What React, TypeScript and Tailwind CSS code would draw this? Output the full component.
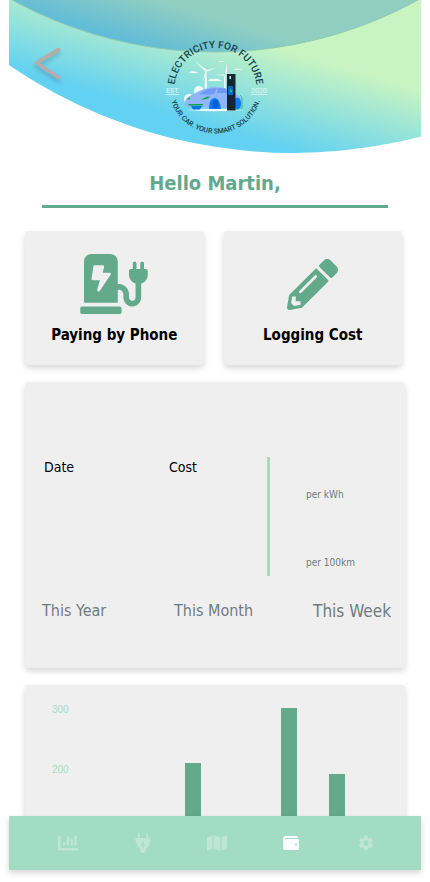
import type { ReactNode } from "react";
import { FaChargingStation, FaPencilAlt, FaChartBar, FaMap, FaWallet } from "react-icons/fa";
import { MdSettings } from "react-icons/md";

const months = [
  { id: 1, cost: 0 },
  { id: 2, cost: 0 },
  { id: 3, cost: 211 },
  { id: 4, cost: 0 },
  { id: 5, cost: 303 },
  { id: 6, cost: 194 },
];

const PX_PER_UNIT = 0.6;

function HeaderBackdrop() {
  return (
    <svg
      className="absolute inset-0 h-full w-full"
      viewBox="9 0 412 154"
      preserveAspectRatio="none"
      aria-hidden="true"
    >
      <defs>
        <linearGradient id="outer" gradientUnits="userSpaceOnUse" x1="-18" y1="61" x2="9" y2="-31">
          <stop offset="0" stopColor="#62d1f2" />
          <stop offset="1" stopColor="#c8f4c2" />
        </linearGradient>
        <linearGradient id="inner" gradientUnits="userSpaceOnUse" x1="-1" y1="3" x2="13" y2="-43">
          <stop offset="0" stopColor="#60bcd8" />
          <stop offset="1" stopColor="#90cec2" />
        </linearGradient>
      </defs>
      <circle cx="293" cy="-349" r="502" fill="url(#outer)" />
      <circle cx="215" cy="-370" r="422" fill="url(#inner)" stroke="#8fcbb0" strokeWidth="1" />
    </svg>
  );
}

function Logo() {
  return (
    <svg className="relative h-[108px] w-[108px]" viewBox="161 34 108 108" role="img" aria-label="Electricity for Future">
      <defs>
        <path id="arc-top" d="M176 100 A41 41 0 1 1 255 100" />
        <path id="arc-bottom" d="M169 87 A46.500 46.500 0 0 0 262 87" />
      </defs>
      <g fill="#15434f" fontFamily="Roboto, sans-serif" fontWeight="500">
        <text fontSize="10" textAnchor="middle">
          <textPath href="#arc-top" startOffset="50%">ELECTRICITY FOR FUTURE</textPath>
        </text>
        <text fontSize="7" textAnchor="middle">
          <textPath href="#arc-bottom" startOffset="50%">YOUR CAR. YOUR SMART SOLUTION.</textPath>
        </text>
      </g>
      <g fill="#e2f6f5" fontFamily="Roboto, sans-serif" fontSize="7">
        <text x="166" y="93">EST.</text>
        <text x="251" y="93">2020</text>
        <path d="M166 94.2h13v.8h-13zM251 94.2h16v.8h-16z" />
      </g>
      <g fill="#eefaf6">
        <path d="M189 73q2-3 5-1.500q3-.5 4 1.500zM208 81q2-3 6-2q4-1 8 2zM218 62q3-2 7 0zM234 70q3-3 9 0z" />
        <circle cx="199" cy="91" r="5" />
        <circle cx="189" cy="99" r="5" />
        <path d="M205 71h1.500l.5 20h-2.500z" />
        <path d="M205 71l-10-9.500 11.500 8zM206 70l10-2-9 3.500zM205.500 71l-3.500 12 4.500-11zM225 74l-10 1 10 .5zM225 74l2-11 0 11zM224 74h1.500v14h-1.500z" />
        <path d="M187 110q28-2.500 56 0q-28 2.500-56 0z" />
      </g>
      <path d="M185 103q0-6 8-8.500q11-7.500 23-7.500q13 0 17 6q8 2 9 9q0 7-9 7l-12-1.500h-14l-20-.5q-2-1-2-4z" fill="#92b4f8" />
      <path d="M199 94q8-6 18-6l-3 6q-8 1-15 0zM218 88q9 0 13 5h-14z" fill="#6c9af5" />
      <path d="M191 106h11l-2 3.500h-7z" fill="#0b72e8" />
      <path d="M209 109q0-11 6-11q5 1 6 11z" fill="#0b79ff" />
      <ellipse cx="215.500" cy="104" rx="3" ry="4.500" fill="#0860cf" />
      <ellipse cx="237.500" cy="103.500" rx="3.500" ry="6" fill="#0b79ff" />
      <path d="M188 104h15v1.500h-14zM201 100q5-4 9-3.500l-2 2zM187 99l3-1.500v2z" fill="#0aa648" />
      <path d="M240 95l2 2v11q-8 3-15 1" fill="none" stroke="#2bb673" strokeWidth=".8" />
      <path d="M227 74h8.500v36.500h-8.500z" fill="#16262f" />
      <path d="M228 86h5v9h-5z" fill="#0764c8" />
      <path d="M231 88l-1.500 3.500h1.500l-.5 2.500 2-3.500h-1.500z" fill="#25e06a" />
      <path d="M229.500 76h1.500v3h-1.500z" fill="#d8ecee" />
    </svg>
  );
}

function ActionCard({ icon, label }: { icon: ReactNode; label: string }) {
  return (
    <button
      type="button"
      className="flex h-[134px] flex-col items-center rounded-[4px] bg-[#efefef] pt-[23px] shadow-[0_3px_6px_rgba(0,0,0,0.16)]"
    >
      <span className="flex h-[60px] items-center text-[#63a98b]">{icon}</span>
      <span className="mt-[11px] text-[15px] leading-5 font-bold text-black">{label}</span>
    </button>
  );
}

function PlugIcon() {
  return (
    <svg className="h-5 w-4" viewBox="0 0 16 20" fill="currentColor" aria-hidden="true">
      <path d="M3 0h1.500v5h7V0H13v5h2.500v3.500H15q0 3.500-4.500 8V19q-2.500 2-5 0v-2.500Q1 12 1 8.500H.5V5H3z" />
      <path d="M9 7.500l-3.500 5H8L7 16l3.500-4.500H8.300z" fill="#a3dcc5" />
    </svg>
  );
}

function NavItem({ label, active, children }: { label: string; active?: boolean; children: ReactNode }) {
  return (
    <a
      href="#"
      aria-label={label}
      className={`flex h-full flex-1 items-center justify-center ${active ? "text-white" : "text-[#bde6d7]"}`}
    >
      {children}
    </a>
  );
}

export default function App() {
  return (
    <div className="h-screen bg-white px-[9px] pb-3 font-['DejaVu_Sans_Condensed','DejaVu_Sans',Tahoma,sans-serif]">
      <div className="flex h-full flex-col">
        <header className="relative grid h-[154px] shrink-0 grid-cols-[1fr_auto_1fr] items-start">
          <HeaderBackdrop />
          <button type="button" aria-label="Back" className="relative mt-[42px] ml-[21px] w-10 drop-shadow-[0_3px_2px_rgba(0,0,0,0.2)]">
            <svg className="h-[42px] w-10" viewBox="0 0 40 42" fill="none" stroke="#bbaaa9" strokeWidth="3.500" strokeLinecap="round" strokeLinejoin="round">
              <path d="M28.500 7.500L6.500 21l22 14.500" />
            </svg>
          </button>
          <div className="mt-[34px]">
            <Logo />
          </div>
        </header>

        <main className="flex min-h-0 flex-1 flex-col overflow-hidden px-4">
          <div className="mx-[17px] shrink-0 border-b-[3px] border-[#63a98b] pt-[15px] pb-[8px]">
            <h1 className="text-center text-xl leading-7 font-bold text-[#63a98b]">Hello Martin,</h1>
          </div>

          <div className="mt-[23px] grid shrink-0 grid-cols-2 gap-5 pr-[3px]">
            <ActionCard icon={<FaChargingStation className="h-[60px] w-[68px]" />} label="Paying by Phone" />
            <ActionCard icon={<FaPencilAlt className="h-[51px] w-[51px]" />} label="Logging Cost" />
          </div>

          <section className="mt-[17px] h-[286px] shrink-0 rounded-[4px] bg-[#efefef] pt-[75px] pr-[14px] pl-[17px] shadow-[0_3px_6px_rgba(0,0,0,0.16)]">
            <div className="grid h-[119px] grid-cols-[125fr_98fr_124fr] pl-[2px]">
              <span className="text-sm leading-5 text-black">Date</span>
              <span className="text-sm leading-5 text-black">Cost</span>
              <div className="flex flex-col border-l-[3px] border-[#a3dcc5] pt-[30px] pl-[36px] text-[10px] leading-4 text-[#6f7b7f]">
                <span>per kWh</span>
                <span className="mt-[52px]">per 100km</span>
              </div>
            </div>
            <div className="mt-[23px] grid grid-cols-[132fr_138fr_79fr] text-base leading-6 whitespace-nowrap text-[#6f7b7f]">
              <span>This Year</span>
              <span>This Month</span>
              <span className="text-right text-[17px]">This Week</span>
            </div>
          </section>

          <section className="mt-[17px] flex h-[260px] shrink-0 rounded-[4px] bg-[#efefef] pt-[18px] shadow-[0_3px_6px_rgba(0,0,0,0.16)]">
            <div className="flex w-12 flex-col gap-12 pt-px pl-[27px] font-['Liberation_Sans',Arial,sans-serif] text-[10px] leading-3 text-[#a3dcc5]">
              <span>300</span>
              <span>200</span>
            </div>
            <div className="mr-11 flex h-[187px] flex-1 items-end">
              {months.map((m) => (
                <div key={m.id} className="flex flex-1 justify-center">
                  <div className="w-4 bg-[#63a98b]" style={{ height: Math.round(m.cost * PX_PER_UNIT) }} />
                </div>
              ))}
            </div>
          </section>
        </main>

        <nav className="relative flex h-[54px] shrink-0 items-center bg-[#a3dcc5] pr-[18px] pl-[22px] shadow-[0_3px_6px_rgba(0,0,0,0.16)]">
          <NavItem label="Statistics"><FaChartBar className="h-5 w-5" /></NavItem>
          <NavItem label="Charging"><PlugIcon /></NavItem>
          <NavItem label="Map"><FaMap className="h-[18px] w-5" /></NavItem>
          <NavItem label="Wallet" active><FaWallet className="h-4 w-4" /></NavItem>
          <NavItem label="Settings"><MdSettings className="h-[18px] w-[18px]" /></NavItem>
        </nav>
      </div>
    </div>
  );
}
